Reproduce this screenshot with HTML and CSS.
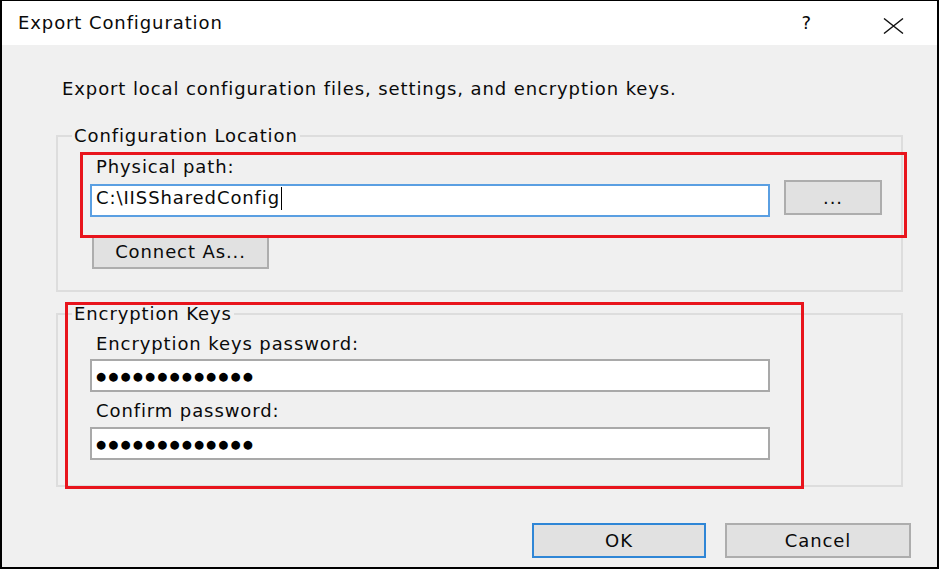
FILE: index.html
```html
<!DOCTYPE html>
<html lang="en">
<head>
    <meta charset="UTF-8">
    <title>Export Configuration</title>
    <link rel="stylesheet" href="styles.css">
</head>
<body>
    <div class="window">
        <!-- title bar -->
        <div class="titlebar">
            <span class="title">Export Configuration</span>
            <span class="help">?</span>
            <span class="close">
                <svg width="21" height="16" viewBox="0 0 21 16">
                    <path d="M1 0.5 L20 15.5 M20 0.5 L1 15.5" stroke="#111" stroke-width="1.4" fill="none"/>
                </svg>
            </span>
        </div>

        <div class="content">
            <p class="intro">Export local configuration files, settings, and encryption keys.</p>

            <fieldset class="group group-location">
                <legend>Configuration Location</legend>
                <div class="label">Physical path:</div>
                <div class="path-row">
                    <div class="textbox focused">C:\IISSharedConfig<span class="caret"></span></div>
                    <div class="btn btn-browse">...</div>
                </div>
                <div class="btn btn-connect">Connect As...</div>
            </fieldset>

            <fieldset class="group group-keys">
                <legend>Encryption Keys</legend>
                <div class="label label-first">Encryption keys password:</div>
                <div class="textbox password"><span class="dots">●●●●●●●●●●●●●</span></div>
                <div class="label label-second">Confirm password:</div>
                <div class="textbox password"><span class="dots">●●●●●●●●●●●●●</span></div>
            </fieldset>

            <div class="footer">
                <div class="btn btn-ok">OK</div>
                <div class="btn btn-cancel">Cancel</div>
            </div>
        </div>

        <!-- red annotation frames -->
        <div class="mark mark-path"></div>
        <div class="mark mark-keys"></div>
    </div>
</body>
</html>
```

FILE: styles.css
```css
* {
    box-sizing: border-box;
}

body {
    margin: 0;
    background: #fff;
    font-family: "DejaVu Sans", "Open Sans", sans-serif;
    font-size: 18px;
    line-height: 24px;
    letter-spacing: 0.9px;
    color: #0a0a0a;
}

/* window frame */
.window {
    position: relative;
    width: 939px;
    height: 569px;
    border: 2px solid #000;
    border-top-width: 1px;
    background: #f0f0f0;
    display: flex;
    flex-direction: column;
}

.titlebar {
    height: 44px;
    background: #fff;
    display: flex;
    align-items: flex-start;
    padding: 10px 33px 0 16px;
}

.help {
    margin-left: auto;
    margin-right: 71px;
}

.close {
    margin-top: 5px;
    height: 16px;
}

.content {
    flex: 1;
    padding: 0 34px 0 54px;
}

.intro {
    margin: 32px 0 0 6px;
}

/* group boxes */
.group {
    margin: 23px 0 0 0;
    padding: 0 0 0 32px;
    border: 2px solid #dddddd;
    min-width: 0;
}

.group legend {
    margin-left: -18px;
    padding: 0 2px;
}

.label {
    margin-left: 6px;
}

.group-location .label {
    margin-top: 7px;
}

.path-row {
    display: flex;
    align-items: flex-start;
    margin-top: 1px;
}

.textbox {
    width: 680px;
    height: 33px;
    background: #fff;
    border: 2px solid #a9a9a9;
    padding: 0 4px;
    white-space: nowrap;
}

.textbox.focused {
    margin-top: 4px;
    border-color: #5a9fe2;
}

.textbox.password {
    display: flex;
    align-items: center;
}

.caret {
    display: inline-block;
    width: 1px;
    height: 23px;
    background: #000;
    vertical-align: -6px;
    margin-left: 1px;
}

.dots {
    font-size: 11.5px;
    letter-spacing: 2.2px;
    line-height: 14px;
    color: #000;
}

.btn {
    display: flex;
    align-items: center;
    justify-content: center;
    height: 35px;
    background: #e1e1e1;
    border: 2px solid #adadad;
}

.btn-browse {
    width: 98px;
    margin-left: 14px;
}

.btn-connect {
    width: 177px;
    height: 34px;
    margin: 18px 0 21px 2px;
}

.group-keys {
    margin-top: 10px;
    padding-bottom: 25px;
}

.label-first {
    margin-top: 6px;
    margin-bottom: 3px;
}

.label-second {
    margin-top: 7px;
    margin-bottom: 4px;
}

/* dialog buttons */
.footer {
    display: flex;
    justify-content: flex-end;
    gap: 19px;
    margin: 36px -8px 0 0;
}

.btn-ok {
    width: 174px;
    border-color: #2f86d6;
}

.btn-cancel {
    width: 186px;
}

/* annotation rectangles */
.mark {
    position: absolute;
    border: 3px solid #e8141c;
}

.mark-path {
    left: 78px;
    top: 151px;
    width: 827px;
    height: 86px;
}

.mark-keys {
    left: 63px;
    top: 301px;
    width: 739px;
    height: 187px;
}
```
